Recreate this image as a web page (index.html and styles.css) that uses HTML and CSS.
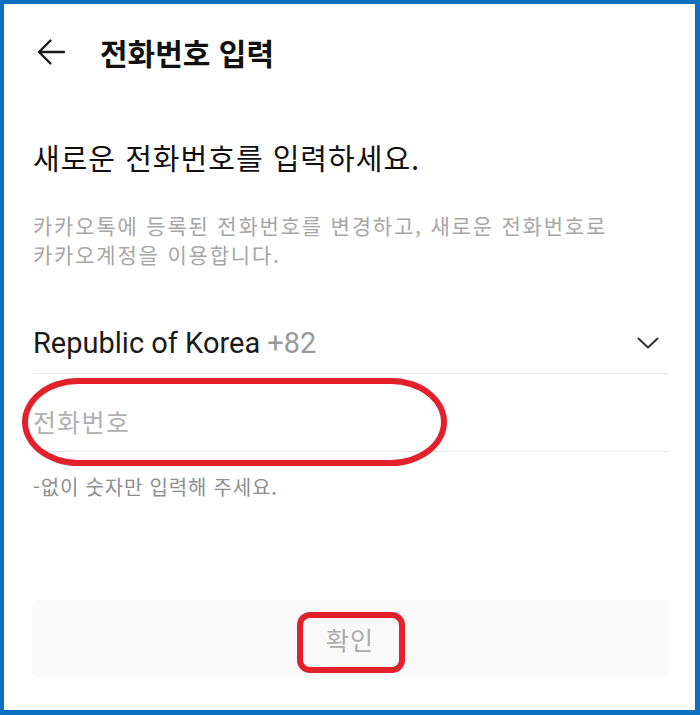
FILE: index.html
```html
<!DOCTYPE html>
<html lang="ko">
<head>
<meta charset="utf-8">
<title>전화번호 입력</title>
<link rel="stylesheet" href="styles.css">
</head>
<body>
<div class="frame">
  <header class="topbar">
    <svg class="back" width="28" height="26" viewBox="0 0 28 26" aria-hidden="true">
      <path d="M27 13H2.5M13.5 1.5L2 13l11.5 11.5" fill="none" stroke="#1a1a1a" stroke-width="2.4" stroke-linecap="round" stroke-linejoin="round"/>
    </svg>
    <h1 class="title">전화번호 입력</h1>
  </header>
  <main class="content">
    <h2 class="heading">새로운 전화번호를 입력하세요.</h2>
    <p class="desc">카카오톡에 등록된 전화번호를 변경하고, 새로운 전화번호로<br>카카오계정을 이용합니다.</p>
    <div class="country">
      <span class="country-name">Republic of Korea <span class="code">+82</span></span>
      <svg class="chev" width="22" height="12" viewBox="0 0 22 12" aria-hidden="true">
        <path d="M1.5 1.5L11 10.5l9.5-9" fill="none" stroke="#333" stroke-width="2" stroke-linecap="round" stroke-linejoin="round"/>
      </svg>
    </div>
    <div class="phone">
      <span class="placeholder">전화번호</span>
      <span class="mark mark-phone"></span>
    </div>
    <p class="hint">-없이 숫자만 입력해 주세요.</p>
    <div class="confirm">
      <span class="confirm-label">확인</span>
      <span class="mark mark-btn"></span>
    </div>
  </main>
</div>
</body>
</html>
```
FILE: styles.css
```css
html, body {
  margin: 0;
  padding: 0;
  background: #ffffff;
}

body {
  font-family: Roboto, "Noto Sans CJK KR", sans-serif;
  color: #111111;
}

.frame {
  box-sizing: border-box;
  width: 700px;
  height: 715px;
  border-style: solid;
  border-color: #0c70c2;
  border-width: 4px 5px 5px 4px;
  display: flex;
  flex-direction: column;
  background: #ffffff;
}

.topbar {
  height: 96px;
  display: flex;
  align-items: center;
  padding-left: 33px;
}

.back {
  display: block;
  flex: none;
}

.title {
  margin: 0 0 0 35px;
  font-family: "Noto Sans CJK KR", sans-serif;
  font-size: 30px;
  font-weight: 700;
  line-height: 40px;
  color: #111111;
}

.content {
  flex: 1;
  display: flex;
  flex-direction: column;
  padding: 0 27px 33px 29px;
}

.heading {
  margin: 39px 0 0;
  font-family: "Noto Sans CJK KR", sans-serif;
  font-size: 29px;
  font-weight: 400;
  line-height: 36px;
  color: #111111;
  letter-spacing: 1px;
}

.desc {
  margin: 36px 0 0;
  font-family: "Noto Sans CJK KR", sans-serif;
  font-size: 21px;
  line-height: 29px;
  letter-spacing: 1.8px;
  color: #a6a6a6;
}

.country {
  margin-top: 44px;
  height: 60px;
  display: flex;
  align-items: center;
  justify-content: space-between;
  border-bottom: 1px solid #e6e6e6;
}

.country-name {
  font-family: Roboto, sans-serif;
  font-size: 29px;
  color: #1a1a1a;
  line-height: 34px;
}

.code {
  color: #9a9a9a;
}

.chev {
  display: block;
  margin-right: 9px;
}

.phone {
  position: relative;
  height: 61px;
  padding-top: 16px;
  display: flex;
  align-items: center;
  border-bottom: 1px solid #e6e6e6;
}

.placeholder {
  font-family: "Noto Sans CJK KR", sans-serif;
  font-size: 25px;
  letter-spacing: 1.3px;
  color: #b0b0b0;
  line-height: 30px;
}

.mark {
  position: absolute;
  box-sizing: border-box;
  border: 6px solid #e3202b;
  pointer-events: none;
}

.mark-phone {
  left: -11px;
  top: 4px;
  width: 425px;
  height: 88px;
  border-radius: 56px / 44px;
}

.hint {
  margin: 22px 0 0;
  font-family: "Noto Sans CJK KR", sans-serif;
  font-size: 20px;
  line-height: 26px;
  letter-spacing: 0.8px;
  color: #8e8e8e;
}

.confirm {
  position: relative;
  margin-top: auto;
  margin-left: -1px;
  height: 77px;
  background: #f9f9f9;
  border-radius: 4px;
  display: flex;
  align-items: center;
  justify-content: center;
}

.confirm-label {
  font-family: "Noto Sans CJK KR", sans-serif;
  font-size: 25px;
  letter-spacing: 1px;
  color: #ababab;
  line-height: 30px;
}

.mark-btn {
  left: 265px;
  top: 12px;
  width: 108px;
  height: 61px;
  border-radius: 13px;
}
```
